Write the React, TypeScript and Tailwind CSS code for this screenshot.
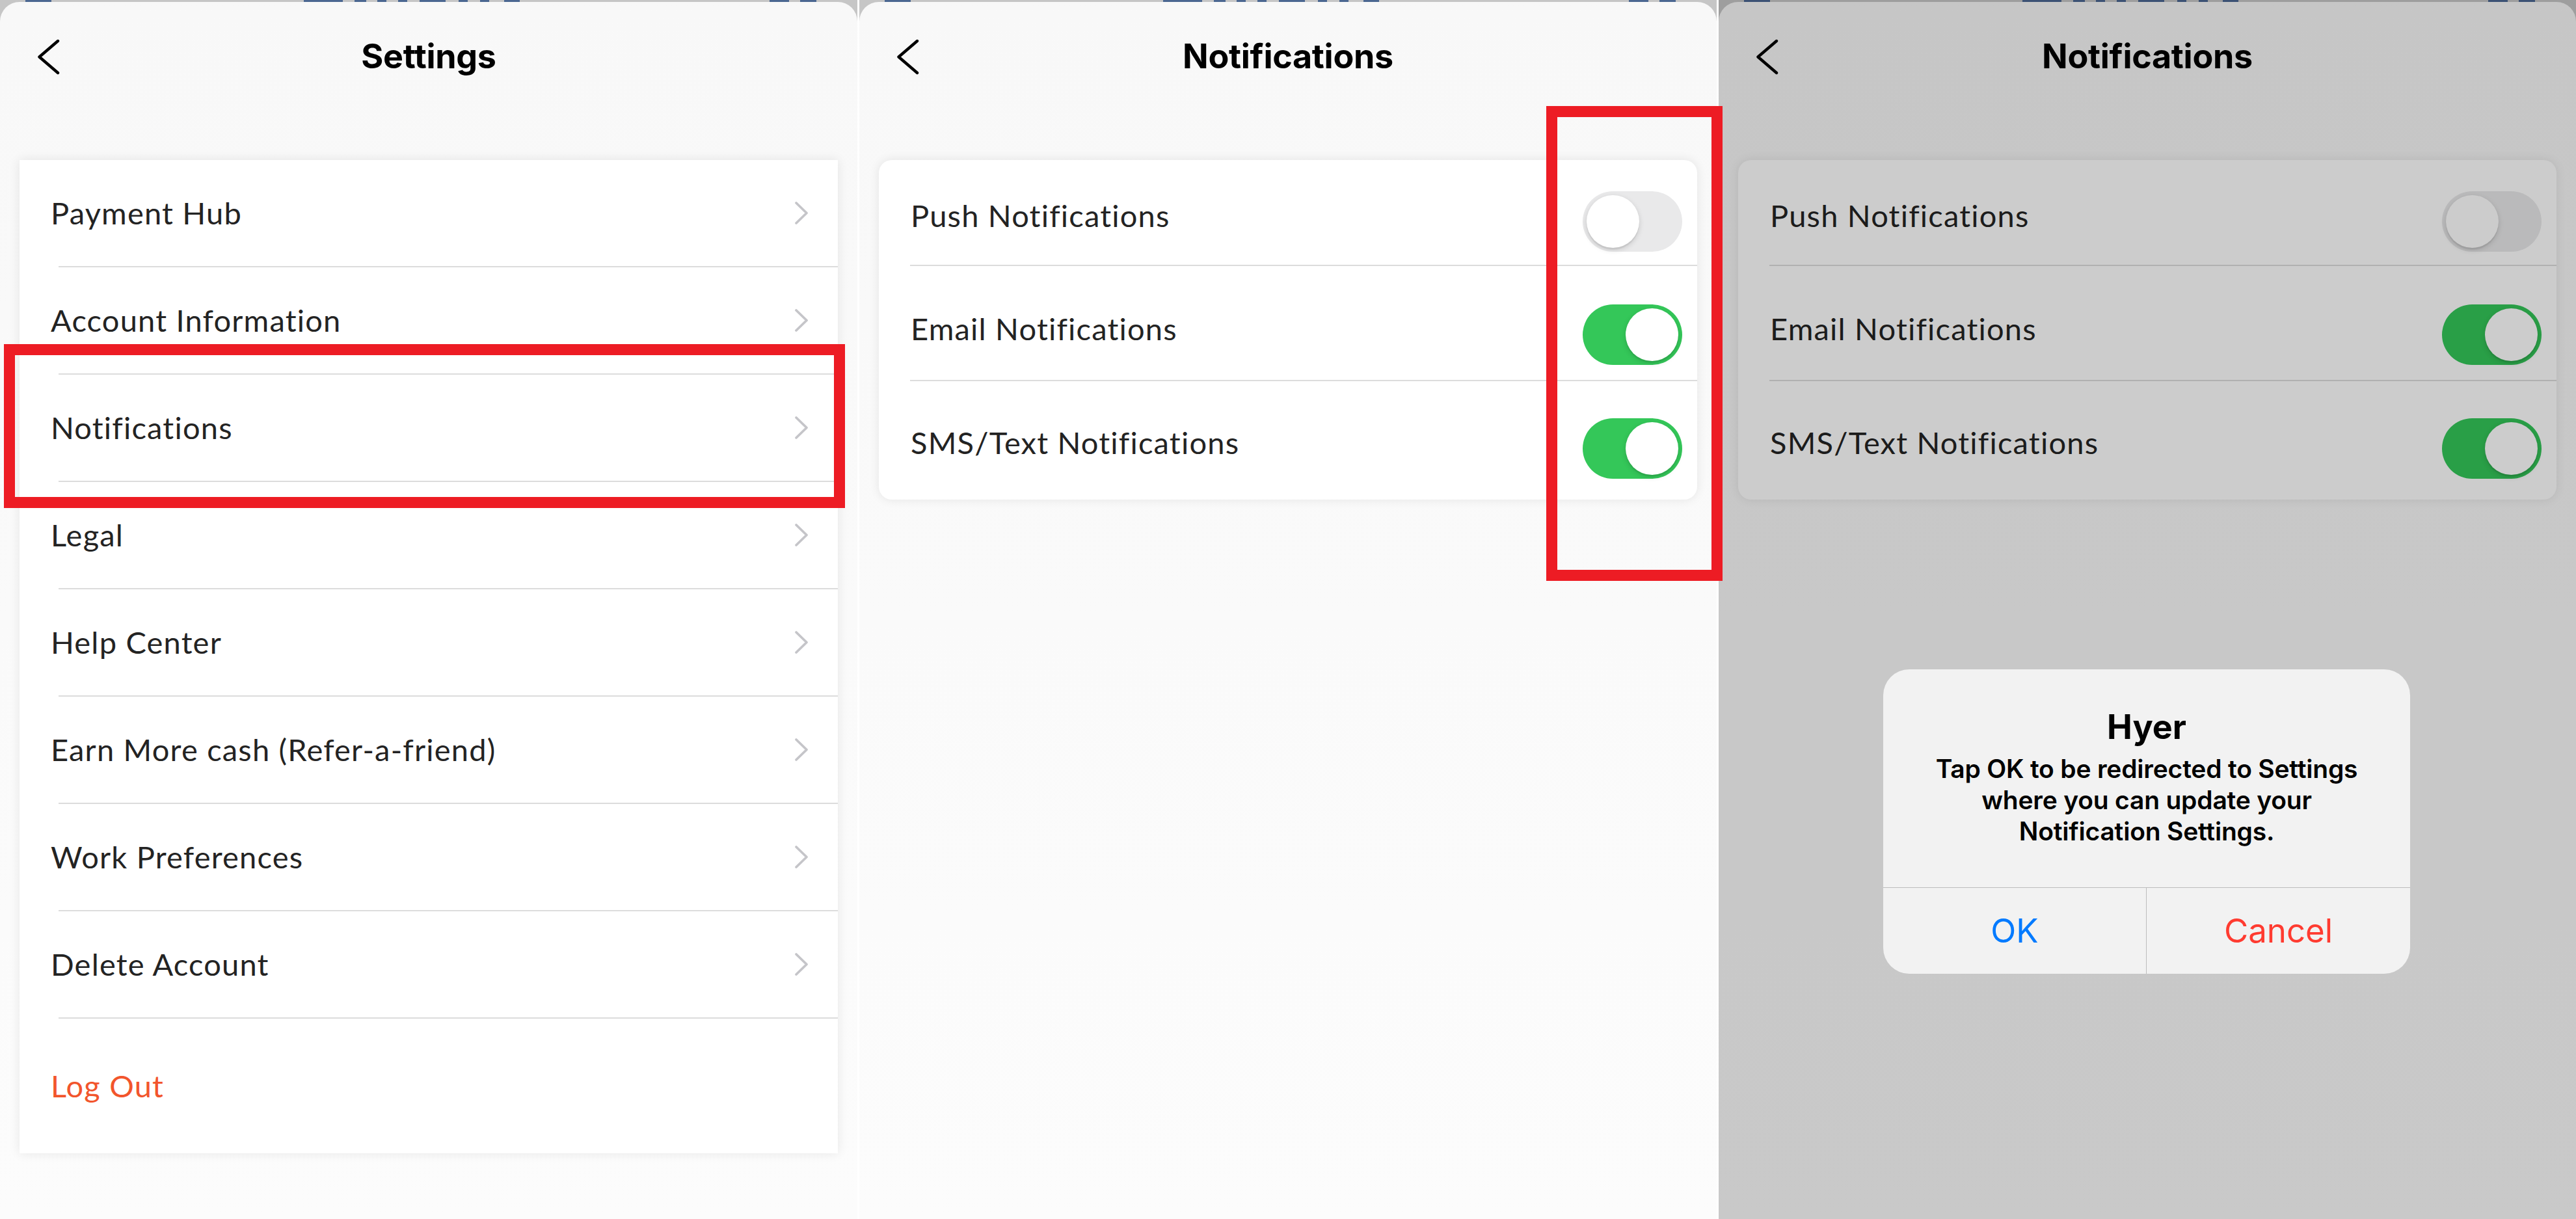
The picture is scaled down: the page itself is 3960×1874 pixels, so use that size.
import React from 'react';

const settingsItems = [
  'Payment Hub',
  'Account Information',
  'Notifications',
  'Legal',
  'Help Center',
  'Earn More cash (Refer-a-friend)',
  'Work Preferences',
  'Delete Account',
];

// row heights / top padding for the notification toggles card
const notificationRows = [
  { label: 'Push Notifications', on: false, row: 'h-[161px] pt-[28px]' },
  { label: 'Email Notifications', on: true, row: 'h-[175px] pt-[36px]' },
  { label: 'SMS/Text Notifications', on: true, row: 'h-[182px] pt-[24px]' },
];

// bits of the app header peeking out above each sheet
const peekBars = [
  'left-[39px] w-[40px]',
  'left-[467px] w-[60px]',
  'left-[545px] w-[18px]',
  'left-[580px] w-[14px]',
  'left-[612px] w-[14px]',
  'left-[645px] w-[40px]',
  'left-[705px] w-[14px]',
  'left-[738px] w-[14px]',
  'left-[775px] w-[24px]',
  'left-[1183px] w-[30px]',
  'left-[1230px] w-[25px]',
];

const listFont = { fontFamily: 'Lato, "Noto Sans", sans-serif' };
const sysFont = { fontFamily: 'Inter, "Liberation Sans", sans-serif' };

function BackChevron() {
  return (
    <svg width="36" height="55" viewBox="0 0 36 55" fill="none">
      <path d="M32 3 L3.5 27.5 L32 52" stroke="#000" strokeWidth="4.4" strokeLinecap="round" strokeLinejoin="round" />
    </svg>
  );
}

function RowChevron() {
  return (
    <svg width="24" height="37" viewBox="0 0 24 37" fill="none">
      <path d="M4 3 L20 18.5 L4 34" stroke="#c5c5c9" strokeWidth="3.8" strokeLinecap="round" strokeLinejoin="round" />
    </svg>
  );
}

function Toggle({ on }: { on: boolean }) {
  if (on) {
    return (
      <div className="w-[153px] h-[93px] rounded-full bg-[#34c759] p-[6px] flex justify-end shrink-0">
        <div className="w-[81px] h-[81px] rounded-full bg-white shadow-[0_3px_8px_rgba(0,0,0,0.15),0_3px_1px_rgba(0,0,0,0.06)]" />
      </div>
    );
  }
  return (
    <div className="w-[153px] h-[93px] rounded-full bg-[#e9e9ea] p-[6px] flex justify-start shrink-0">
      <div className="w-[81px] h-[81px] rounded-full bg-white shadow-[0_3px_8px_rgba(0,0,0,0.15),0_3px_1px_rgba(0,0,0,0.06)]" />
    </div>
  );
}

function Header({ title }: { title: string }) {
  return (
    <div className="h-[168px] grid grid-cols-[1fr_auto_1fr] items-center">
      <div className="pl-[57px] flex items-center">
        <BackChevron />
      </div>
      <h1 className="text-[52px] leading-[60px] font-bold text-black tracking-[-0.3px]" style={sysFont}>
        {title}
      </h1>
      <div />
    </div>
  );
}

function Sheet({ children }: { children: React.ReactNode }) {
  return (
    <div className="relative w-[1318px] h-full bg-[#c6c6c6] flex flex-col shrink-0">
      {peekBars.map((pos) => (
        <div key={pos} className={`absolute top-0 h-[3px] bg-[#4b6791] ${pos}`} />
      ))}
      <div className="relative mt-[3px] flex-1 rounded-t-[30px] bg-linear-to-b from-[#f8f8f8] via-[#fafafa] to-[#fcfcfc] flex flex-col">
        {children}
      </div>
    </div>
  );
}

function SettingsScreen() {
  return (
    <Sheet>
      <Header title="Settings" />
      <div className="mx-[30px] mt-[75px] bg-white shadow-[0_0_16px_rgba(0,0,0,0.09)]" style={listFont}>
        {settingsItems.map((item) => (
          <div key={item} className="h-[165px] flex flex-col">
            <div className="flex-1 flex items-center justify-between pl-[48px] pr-[44px]">
              <span className="text-[47px] tracking-[1.2px] text-[#232323]">{item}</span>
              <RowChevron />
            </div>
            <div className="ml-[60px] h-[2px] bg-[#dcdcdc]" />
          </div>
        ))}
        <div className="h-[207px] flex items-center pl-[48px]">
          <span className="text-[47px] tracking-[1.2px] text-[#f2552c]">Log Out</span>
        </div>
      </div>
    </Sheet>
  );
}

function NotificationsCard() {
  return (
    <div className="mx-[30px] mt-[75px] bg-white rounded-[20px] shadow-[0_0_16px_rgba(0,0,0,0.09)]" style={listFont}>
      {notificationRows.map((r, i) => (
        <div key={r.label}>
          <div className={`${r.row} flex`}>
            <div className="flex-1 flex items-center justify-between pl-[49px] pr-[23px]">
              <span className="text-[47px] tracking-[1.2px] text-[#232323] mb-[18px]">{r.label}</span>
              <Toggle on={r.on} />
            </div>
          </div>
          {i < notificationRows.length - 1 && <div className="ml-[48px] h-[2px] bg-[#dcdcdc]" />}
        </div>
      ))}
    </div>
  );
}

function AlertDialog() {
  return (
    <div
      className="absolute left-[253px] top-[1026px] w-[810px] rounded-[40px] bg-[#f2f2f2] overflow-hidden text-center text-black"
      style={sysFont}
    >
      <div className="pt-[59px] pb-[62px] px-[40px]">
        <div className="text-[52px] leading-[60px] font-bold">Hyer</div>
        <p className="mt-[10px] text-[39px] leading-[48px] font-semibold tracking-[-0.2px]">
          Tap OK to be redirected to Settings
          <br />
          where you can update your
          <br />
          Notification Settings.
        </p>
      </div>
      <div className="h-px bg-[#bcbcbc]" />
      <div className="grid grid-cols-2 h-[132px]">
        <button className="text-[51px] text-[#007aff] border-r border-[#bcbcbc]">OK</button>
        <button className="text-[51px] text-[#ff3b30]">Cancel</button>
      </div>
    </div>
  );
}

export default function App() {
  return (
    <div className="relative w-[3960px] h-[1874px] bg-white flex gap-[3px] overflow-hidden">
      <SettingsScreen />

      <Sheet>
        <Header title="Notifications" />
        <NotificationsCard />
      </Sheet>

      <Sheet>
        <Header title="Notifications" />
        <NotificationsCard />
        {/* dimmed backdrop behind the alert */}
        <div className="absolute -top-[3px] inset-x-0 bottom-0 bg-black/20" />
        <AlertDialog />
      </Sheet>

      {/* highlight frames */}
      <div className="absolute left-[6px] top-[529px] w-[1293px] h-[252px] border-[17px] border-[#ed1c24]" />
      <div className="absolute left-[2377px] top-[163px] w-[271px] h-[730px] border-[17px] border-[#ed1c24]" />
    </div>
  );
}
